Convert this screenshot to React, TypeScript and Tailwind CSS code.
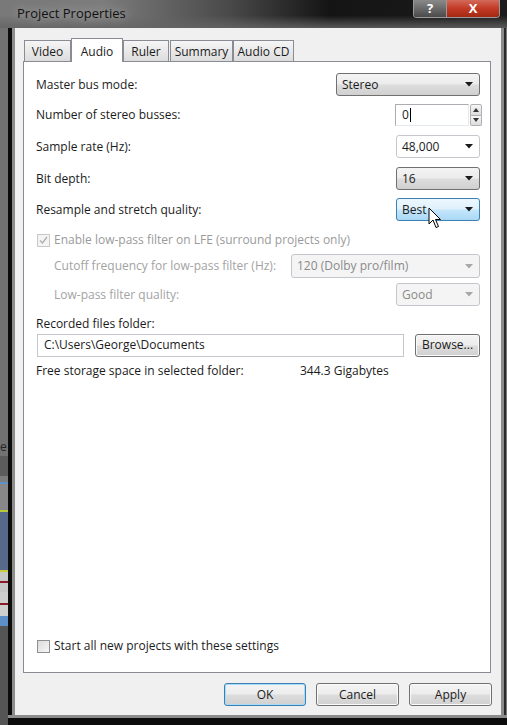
import React from "react";

const font = "font-['Open_Sans','Noto_Sans',sans-serif]";

function Arrow({ color = "#000" }: { color?: string }) {
  return (
    <svg width="8" height="5" viewBox="0 0 8 5">
      <path d="M0 0 L8 0 L4 4.5 Z" fill={color} />
    </svg>
  );
}

type ComboKind = "normal" | "edit" | "hot" | "disabled";

function Combo({ text, kind, w, h = 23 }: { text: string; kind: ComboKind; w: string; h?: number }) {
  const base = "flex items-center justify-between pl-[5px] pr-[6px] rounded-[3px] border";
  let cls = "";
  if (kind === "normal")
    cls = "border-[#707070] bg-[linear-gradient(to_bottom,#f4f4f4_0%,#ececec_48%,#dddddd_52%,#d0d0d0_100%)] text-[#1b1b1b]";
  if (kind === "edit") cls = "border-[#c4c7cc] rounded-[2px] bg-white text-[#1b1b1b]";
  if (kind === "hot")
    cls = "border-[#3c7fb1] bg-[linear-gradient(to_bottom,#edf7fd_0%,#dff1fc_48%,#c4e6fb_52%,#a9d8f6_100%)] text-[#1b1b1b]";
  if (kind === "disabled") cls = "border-[#c3c6ca] bg-[#f4f4f4] text-[#8a8a8a]";
  return (
    <div className={`${base} ${cls} ${w} ${h === 24 ? "h-[24px]" : "h-[23px]"}`}>
      <span className="leading-none">{text}</span>
      <Arrow color={kind === "disabled" ? "#a8a8a8" : "#1a1a1a"} />
    </div>
  );
}

function Checkbox({ checked, disabled }: { checked?: boolean; disabled?: boolean }) {
  return (
    <div
      className={`w-[13px] h-[13px] border flex items-center justify-center ${
        disabled
          ? "border-[#c9c9c9] bg-[#f4f4f4]"
          : "border-[#8f8f8f] bg-[linear-gradient(135deg,#dcdcdc_0%,#f6f6f6_100%)]"
      }`}
    >
      {checked && (
        <svg width="9" height="9" viewBox="0 0 9 9">
          <path d="M1 4.5 L3.5 7 L8 1" stroke={disabled ? "#b0b0b0" : "#333"} strokeWidth="1.4" fill="none" />
        </svg>
      )}
    </div>
  );
}

function Button({ label, def, w }: { label: string; def?: boolean; w: string }) {
  return (
    <div
      className={`${w} h-[23px] rounded-[3px] border flex items-center justify-center text-[#1b1b1b] ${
        def
          ? "border-[#3c7fb1] shadow-[inset_0_0_0_1px_#a6dcf8] bg-[linear-gradient(to_bottom,#f4f4f4_0%,#ececec_48%,#dddddd_52%,#d0d0d0_100%)]"
          : "border-[#707070] shadow-[inset_0_0_0_1px_#fafafa] bg-[linear-gradient(to_bottom,#f4f4f4_0%,#ececec_48%,#dddddd_52%,#d0d0d0_100%)]"
      }`}
    >
      {label}
    </div>
  );
}

function Tab({ label, selected, w }: { label: string; selected?: boolean; w: string }) {
  if (selected)
    return (
      <div
        className={`${w} h-[24px] -mb-px relative z-10 bg-white border border-b-0 border-[#898c95] flex items-start justify-center pt-[4px] text-[#1b1b1b]`}
      >
        {label}
      </div>
    );
  return (
    <div
      className={`${w} h-[21px] border border-b-0 border-[#898c95] bg-[linear-gradient(to_bottom,#f5f5f5_0%,#e9e9e9_50%,#dcdcdc_100%)] flex items-center justify-center pt-[2px] text-[#1b1b1b]`}
    >
      {label}
    </div>
  );
}

function Cursor() {
  return (
    <svg className="absolute left-[428px] top-[207px] z-20" width="14" height="22" viewBox="0 0 14 22">
      <path
        d="M1 1 L1 17 L5 13 L8 20.5 L10.5 19.5 L7.5 12.5 L12.5 12.5 Z"
        fill="#fff"
        stroke="#000"
        strokeWidth="1"
        strokeLinejoin="round"
      />
    </svg>
  );
}

export default function App() {
  return (
    <div className={`w-[507px] h-[725px] relative overflow-hidden bg-[#6f6f6f] text-[12px] ${font} flex flex-col`}>
      {/* Title bar */}
      <div className="h-[28px] shrink-0 flex justify-between bg-[linear-gradient(to_bottom,rgba(0,0,0,0)_55%,rgba(100,100,100,0.85)_100%),linear-gradient(to_right,#787878_0%,#7c7c7c_20%,#4a4a4a_45%,#141414_65%,#1c1c1c_100%)]">
        <div className="pl-[17px] pt-[4px] text-[13px] text-[#111] [text-shadow:0_0_10px_rgba(200,200,200,0.9)]">
          Project Properties
        </div>
        <div className="flex mr-[7px] h-[18px] rounded-b-[4px] border border-t-0 border-[#9a9a9a] overflow-hidden">
          <div className="w-[33px] h-full bg-[linear-gradient(to_bottom,#8a8a8a_0%,#6a6a6a_50%,#4a4a4a_100%)] flex items-center justify-center text-white font-bold text-[13px] border-r border-[#9a9a9a]">
            ?
          </div>
          <div className="w-[52px] h-full bg-[linear-gradient(to_bottom,#d46a5a_0%,#c23a25_50%,#a52812_100%)] flex items-center justify-center text-white font-bold text-[13px]">
            X
          </div>
        </div>
      </div>

      <div className="flex-1 flex min-h-0">
        {/* left strip: background app + frame */}
        <div className="w-[8px] flex flex-col bg-[#727272]">
          <div className="h-[410px]" />
          <div className="h-[18px] text-[12px] leading-[18px] text-[#222] overflow-hidden">e</div>
          <div className="h-[20px] bg-[#5c5c5c]" />
          <div className="h-[6px] bg-[#7d7d7d]" />
          <div className="h-[2px] bg-[#5d8fc9]" />
          <div className="h-[26px] bg-[#888]" />
          <div className="h-[2px] bg-[#b7c73a]" />
          <div className="h-[58px] bg-[#56698a]" />
          <div className="h-[2px] bg-[#c9cf3c]" />
          <div className="h-[20px] bg-[#c8c8c8] flex items-center"><div className="h-[2px] w-full bg-[#8a1a2a]" /></div>
          <div className="h-[24px] bg-[#cfcfcf] flex items-center"><div className="h-[2px] w-full bg-[#8a1a2a]" /></div>
          <div className="h-[10px] bg-[#5d8fc9]" />
          <div className="flex-1 bg-[#555]" />
        </div>
        <div className="w-[4px] bg-[#0c0c0c]" />
        <div className="w-[3px] bg-[#8c8c8c]" />

        {/* Client area */}
        <div className="w-[486px] bg-[#f0f0f0] flex flex-col relative">
          {/* Tabs */}
          <div className="h-[33px] shrink-0 flex items-end pl-[9px]">
            <Tab label="Video" w="w-[47px]" />
            <Tab label="Audio" w="w-[52px]" selected />
            <Tab label="Ruler" w="w-[46px]" />
            <div className="w-px" />
            <Tab label="Summary" w="w-[63px]" />
            <Tab label="Audio CD" w="w-[61px]" />
          </div>

          {/* Panel */}
          <div className="ml-[8px] w-[468px] h-[612px] border border-[#898c95] bg-white flex flex-col pt-[11px] pl-[12px] pr-[10px] pb-[18px] text-[#1b1b1b]">
            <div className="h-[23px] flex items-center justify-between">
              <span>Master bus mode:</span>
              <Combo text="Stereo" kind="normal" w="w-[144px]" />
            </div>
            <div className="mt-[8px] h-[22px] flex items-center justify-between">
              <span>Number of stereo busses:</span>
              <div className="flex h-[22px] -mr-[2px]">
                <div className="w-[74px] h-[22px] border border-[#abadb3] border-r-[#e3e9ef] border-b-[#e3e9ef] bg-white flex items-center pl-[6px]">
                  <span>0</span>
                  <span className="w-px h-[14px] bg-black ml-px" />
                </div>
                <div className="w-[12px] flex flex-col ml-px">
                  <div className="flex-1 border border-[#b0b0b0] rounded-t-[2px] bg-[linear-gradient(to_bottom,#f6f6f6,#dcdcdc)] flex items-center justify-center">
                    <svg width="6" height="4" viewBox="0 0 6 4"><path d="M0 4 L6 4 L3 0 Z" fill="#333" /></svg>
                  </div>
                  <div className="flex-1 border border-t-0 border-[#b0b0b0] rounded-b-[2px] bg-[linear-gradient(to_bottom,#f6f6f6,#dcdcdc)] flex items-center justify-center">
                    <svg width="6" height="4" viewBox="0 0 6 4"><path d="M0 0 L6 0 L3 4 Z" fill="#333" /></svg>
                  </div>
                </div>
              </div>
            </div>
            <div className="mt-[9px] h-[23px] flex items-center justify-between">
              <span>Sample rate (Hz):</span>
              <Combo text="48,000" kind="edit" w="w-[84px]" />
            </div>
            <div className="mt-[9px] h-[23px] flex items-center justify-between">
              <span>Bit depth:</span>
              <Combo text="16" kind="normal" w="w-[84px]" />
            </div>
            <div className="mt-[8px] h-[23px] flex items-center justify-between">
              <span>Resample and stretch quality:</span>
              <Combo text="Best" kind="hot" w="w-[84px]" />
            </div>

            <div className="mt-[11px] h-[16px] flex items-center gap-[4px] pl-px text-[#9a9a9a]">
              <Checkbox checked disabled />
              <span>Enable low-pass filter on LFE (surround projects only)</span>
            </div>
            <div className="mt-[6px] h-[24px] flex items-center justify-between pl-[18px] text-[#a3a3a3]">
              <span>Cutoff frequency for low-pass filter (Hz):</span>
              <Combo text="120 (Dolby pro/film)" kind="disabled" w="w-[189px]" h={24} />
            </div>
            <div className="mt-[5px] h-[23px] flex items-center justify-between pl-[18px] text-[#a3a3a3]">
              <span>Low-pass filter quality:</span>
              <Combo text="Good" kind="disabled" w="w-[84px]" />
            </div>

            <div className="mt-[10px] h-[16px] flex items-center">Recorded files folder:</div>
            <div className="mt-[1px] h-[24px] flex items-center justify-between">
              <div className="ml-px w-[367px] h-[23px] border border-[#c4c7cc] bg-white flex items-center pl-[6px]">
                C:\Users\George\Documents
              </div>
              <Button label="Browse..." w="w-[65px]" />
            </div>
            <div className="mt-[6px] h-[16px] flex items-center">
              <span className="w-[264px]">Free storage space in selected folder:</span>
              <span>344.3 Gigabytes</span>
            </div>

            <div className="flex-1" />
            <div className="h-[16px] flex items-center gap-[4px] pl-px">
              <Checkbox />
              <span>Start all new projects with these settings</span>
            </div>
          </div>

          {/* Buttons */}
          <div className="mt-[10px] flex justify-end gap-[10px] pr-[9px]">
            <Button label="OK" def w="w-[82px]" />
            <Button label="Cancel" w="w-[83px]" />
            <Button label="Apply" w="w-[83px]" />
          </div>
          <div className="flex-1" />
        </div>

        {/* right frame */}
        <div className="flex-1 flex">
          <div className="w-[3px] bg-[#8a8a8a]" />
          <div className="w-[2px] bg-[#2a2a2a]" />
          <div className="flex-1 bg-[#7a7a7a]" />
        </div>
      </div>
      {/* bottom frame */}
      <div className="h-[10px] shrink-0 flex">
        <div className="w-[8px] bg-[#555]" />
        <div className="flex-1 bg-[#0c0c0c] border-t-[3px] border-[#8c8c8c]" />
      </div>
      <Cursor />
    </div>
  );
}
